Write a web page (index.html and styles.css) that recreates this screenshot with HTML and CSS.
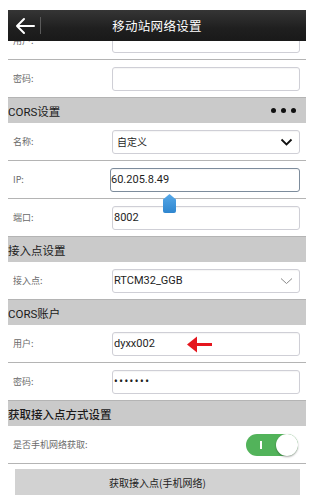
FILE: index.html
```html
<!DOCTYPE html>
<html lang="zh-CN">
<head>
<meta charset="utf-8">
<title>移动站网络设置</title>
<link rel="stylesheet" href="styles.css">
</head>
<body>
<div class="screen">
  <div class="topbar">
    <svg class="back" width="22" height="20" viewBox="0 0 22 20"><path d="M3 10 H20 M10 3 L3 10 L10 17" fill="none" stroke="#fff" stroke-width="2" stroke-linecap="round" stroke-linejoin="round"/></svg>
    <span class="sep"></span>
    <span class="title">移动站网络设置</span>
  </div>

  <div class="row"><span class="label">用户:</span><div class="field"></div></div>
  <div class="row"><span class="label">密码:</span><div class="field"></div></div>

  <div class="section"><span>CORS设置</span><span class="dots"><i></i><i></i><i></i></span></div>
  <div class="row"><span class="label">名称:</span><div class="field select"><span class="cjk-val">自定义</span><svg class="chev" width="13" height="8" viewBox="0 0 13 8"><path d="M1.5 1.5 L6.5 6.5 L11.5 1.5" fill="none" stroke="#111" stroke-width="1.8"/></svg></div></div>
  <div class="row ip-row"><span class="label">IP:</span><div class="field focus">60.205.8.49</div><svg class="handle" width="13" height="19" viewBox="0 0 13 19"><defs><linearGradient id="hg" x1="0" y1="0" x2="0" y2="1"><stop offset="0" stop-color="#56a8e8"/><stop offset="1" stop-color="#2f86cf"/></linearGradient></defs><path d="M6.5 0 L13 5.5 L13 17 Q13 19 11 19 L2 19 Q0 19 0 17 L0 5.5 Z" fill="url(#hg)"/></svg></div>
  <div class="row"><span class="label">端口:</span><div class="field">8002</div></div>

  <div class="section"><span>接入点设置</span></div>
  <div class="row"><span class="label">接入点:</span><div class="field select">RTCM32_GGB<svg class="chev" width="13" height="8" viewBox="0 0 13 8"><path d="M1 1.5 L6.5 6.5 L12 1.5" fill="none" stroke="#8a8a8a" stroke-width="1"/></svg></div></div>

  <div class="section"><span>CORS账户</span></div>
  <div class="row user-row"><span class="label">用户:</span><div class="field">dyxx002</div><svg class="red-arrow" width="26" height="17" viewBox="0 0 26 17"><path d="M0 8.5 L10 0.5 L10 7 L25 7 L25 10 L10 10 L10 16.5 Z" fill="#e5161e"/></svg></div>
  <div class="row"><span class="label">密码:</span><div class="field pwd">•••••••</div></div>

  <div class="section big"><span>获取接入点方式设置</span></div>
  <div class="row"><span class="label">是否手机网络获取:</span><div class="toggle"><span class="on-mark"></span><span class="knob"></span></div></div>

  <div class="btn">获取接入点(手机网络)</div>
</div>
</body>
</html>
```

FILE: styles.css
```css
html, body {
  margin: 0;
  padding: 0;
  background: #fff;
}
body {
  font-family: Roboto, "Noto Sans CJK SC", sans-serif;
  width: 326px;
  height: 499px;
  overflow: hidden;
}
.screen {
  position: relative;
  margin: 0 20px 0 8px;
  padding-top: 22px;
}
.topbar {
  position: absolute;
  top: 10px;
  left: 0;
  right: 0;
  height: 31px;
  background: linear-gradient(#353535, #1f1f1f 60%, #191919);
  display: flex;
  align-items: center;
  z-index: 5;
}
.back {
  margin-left: 6px;
  flex: none;
}
.sep {
  width: 1px;
  height: 17px;
  background: #5a5a5a;
  margin-left: 4px;
  flex: none;
}
.title {
  position: absolute;
  left: 0;
  right: 0;
  text-align: center;
  color: #fff;
  font-size: 12.5px;
  font-family: "Noto Sans CJK SC", sans-serif;
  letter-spacing: 0.3px;
}
.row {
  position: relative;
  height: 37px;
  border-bottom: 1px solid #b4b4b4;
  display: flex;
  align-items: center;
}
.label {
  width: 104px;
  padding-left: 5px;
  box-sizing: border-box;
  font-size: 9px;
  color: #6a6a6a;
  font-family: "Noto Sans CJK SC", sans-serif;
  flex: none;
}
.field {
  width: 188px;
  height: 24px;
  box-sizing: border-box;
  border: 1px solid #cfcfd6;
  border-radius: 3px;
  background: #fff;
  font-size: 11px;
  color: #1e1e1e;
  display: flex;
  align-items: center;
  padding-left: 1px;
  box-shadow: inset 0 1px 1px rgba(0,0,0,0.04);
}
.field.focus {
  border-color: #7d8c9c;
  padding-left: 0;
  margin-left: -2px;
  width: 190px;
}
.field.select {
  justify-content: space-between;
  padding: 0 6px 0 1px;
}
.cjk-val {
  font-family: "Noto Sans CJK SC", sans-serif;
  font-size: 10px;
  padding-left: 3px;
}
.field.pwd {
  font-size: 10px;
  font-weight: 700;
  letter-spacing: 1.6px;
  padding-left: 1px;
}
.handle {
  position: absolute;
  left: 155px;
  top: 33px;
  z-index: 3;
}
.red-arrow {
  position: absolute;
  left: 179px;
  top: 11px;
}
.section {
  height: 25px;
  background: #cacaca;
  display: flex;
  align-items: center;
  justify-content: space-between;
  font-size: 11.5px;
  color: #1a1a1a;
  font-family: Roboto, "Noto Sans CJK SC", sans-serif;
}
.section.big {
  font-size: 11.5px;
  font-weight: 500;
}
.dots {
  display: flex;
  gap: 5px;
  margin-right: 10px;
}
.dots i {
  width: 5px;
  height: 5px;
  border-radius: 50%;
  background: #111;
}
.toggle {
  margin-left: auto;
  margin-right: 8px;
  width: 52px;
  height: 22px;
  border-radius: 11px;
  background: #52b35a;
  position: relative;
  display: flex;
  align-items: center;
}
.on-mark {
  width: 2px;
  height: 8px;
  background: #fff;
  margin-left: 14px;
}
.knob {
  position: absolute;
  right: 0;
  top: 0;
  width: 22px;
  height: 22px;
  box-sizing: border-box;
  border-radius: 50%;
  background: #fff;
  box-shadow: 0 1px 2px rgba(0,0,0,0.35);
}
.btn {
  margin: 5px 6px 0 7px;
  height: 26px;
  background: #d2d2d2;
  display: flex;
  align-items: center;
  justify-content: center;
  font-size: 10px;
  color: #222;
  font-family: "Noto Sans CJK SC", sans-serif;
}
```
